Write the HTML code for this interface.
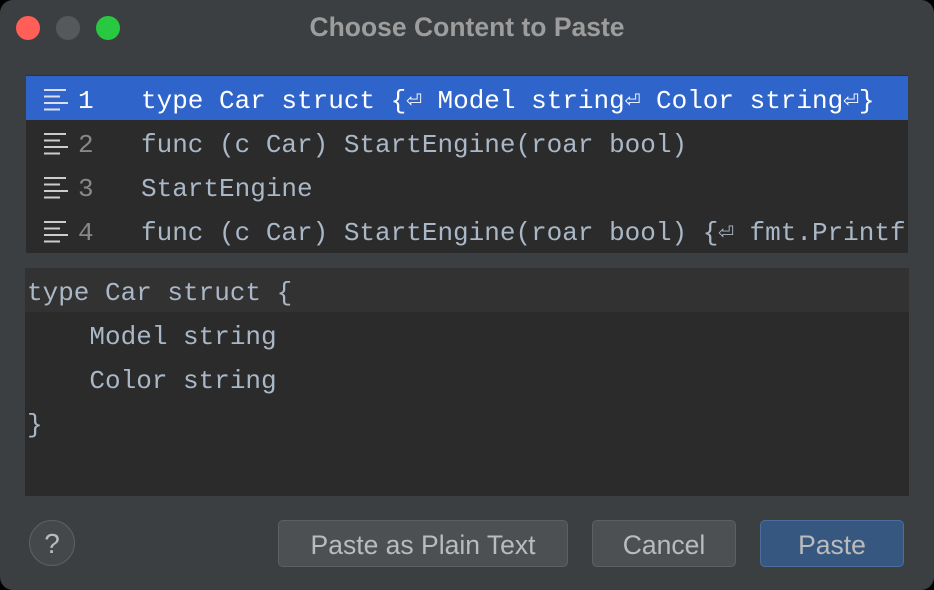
<!DOCTYPE html><html><head><style>
body{margin:0;background:#000;width:934px;height:590px;overflow:hidden;font-family:"Liberation Sans",sans-serif}
.win{position:absolute;left:0;top:0;width:934px;height:590px;background:#3c3f41;border-radius:13px;overflow:hidden}
.dot{position:absolute;top:16px;width:24px;height:24px;border-radius:50%}
.title{position:absolute;top:12px;left:0;width:934px;text-align:center;color:#9d9d9d;font-weight:bold;font-size:26.5px}
.list{position:absolute;left:26px;top:75px;width:882px;height:177px;background:#2b2b2b;border-top:1px solid #2f3133;overflow:hidden}
.row{height:44px;position:relative;font-family:"Liberation Mono",monospace;font-size:26px;color:#a9b7c6;white-space:pre;line-height:50px}
.row.sel{background:#2f65ca;color:#fff}
.row .n{position:absolute;left:52px;color:#888}
.row.sel .n{color:#fff}
.row .t{position:absolute;left:115px}
.ic{position:absolute;left:18px;top:12px}
.prev{position:absolute;left:25px;top:268px;width:884px;height:228px;background:#2b2b2b}
.pl{height:44px;line-height:50px;font-family:"Liberation Mono",monospace;font-size:26px;color:#a9b7c6;white-space:pre;padding-left:2px}
.btn{position:absolute;top:520px;border:1px solid #5e6060;border-radius:5px;background:#4c5052;color:#bbbbbb;font-size:26.5px;text-align:center;line-height:48px;box-sizing:border-box;height:47px}
</style></head><body><div class="win">
<div class="dot" style="left:16px;background:#ff5f57"></div>
<div class="dot" style="left:56px;background:#56595c"></div>
<div class="dot" style="left:96px;background:#28c840"></div>
<div class="title">Choose Content to Paste</div>
<div class="list">
<div class="row sel"><svg class="ic" width="26" height="24"><g stroke="#dde" stroke-width="2"><line x1="0" y1="2" x2="22" y2="2"/><line x1="0" y1="8.5" x2="16" y2="8.5"/><line x1="0" y1="15" x2="24" y2="15"/><line x1="0" y1="21.5" x2="16" y2="21.5"/></g></svg><span class="n">1</span><span class="t">type Car struct {⏎ Model string⏎ Color string⏎}</span></div>
<div class="row"><svg class="ic" width="26" height="24"><g stroke="#ccc" stroke-width="2"><line x1="0" y1="2" x2="22" y2="2"/><line x1="0" y1="8.5" x2="16" y2="8.5"/><line x1="0" y1="15" x2="24" y2="15"/><line x1="0" y1="21.5" x2="16" y2="21.5"/></g></svg><span class="n">2</span><span class="t">func (c Car) StartEngine(roar bool)</span></div>
<div class="row"><svg class="ic" width="26" height="24"><g stroke="#ccc" stroke-width="2"><line x1="0" y1="2" x2="22" y2="2"/><line x1="0" y1="8.5" x2="16" y2="8.5"/><line x1="0" y1="15" x2="24" y2="15"/><line x1="0" y1="21.5" x2="16" y2="21.5"/></g></svg><span class="n">3</span><span class="t">StartEngine</span></div>
<div class="row"><svg class="ic" width="26" height="24"><g stroke="#ccc" stroke-width="2"><line x1="0" y1="2" x2="22" y2="2"/><line x1="0" y1="8.5" x2="16" y2="8.5"/><line x1="0" y1="15" x2="24" y2="15"/><line x1="0" y1="21.5" x2="16" y2="21.5"/></g></svg><span class="n">4</span><span class="t">func (c Car) StartEngine(roar bool) {⏎ fmt.Printf</span></div>
</div>
<div class="prev">
<div class="pl" style="background:#323232">type Car struct {</div>
<div class="pl">    Model string</div>
<div class="pl">    Color string</div>
<div class="pl">}</div>
</div>
<div style="position:absolute;left:29px;top:520px;width:44px;height:44px;border-radius:50%;border:1px solid #5e6060;background:#45484a;color:#bbb;font-size:28px;text-align:center;line-height:46px">?</div>
<div class="btn" style="left:278px;width:290px">Paste as Plain Text</div>
<div class="btn" style="left:592px;width:144px">Cancel</div>
<div class="btn" style="left:760px;width:144px;background:#365880;border-color:#4a6f9c">Paste</div>
</div></body></html>
